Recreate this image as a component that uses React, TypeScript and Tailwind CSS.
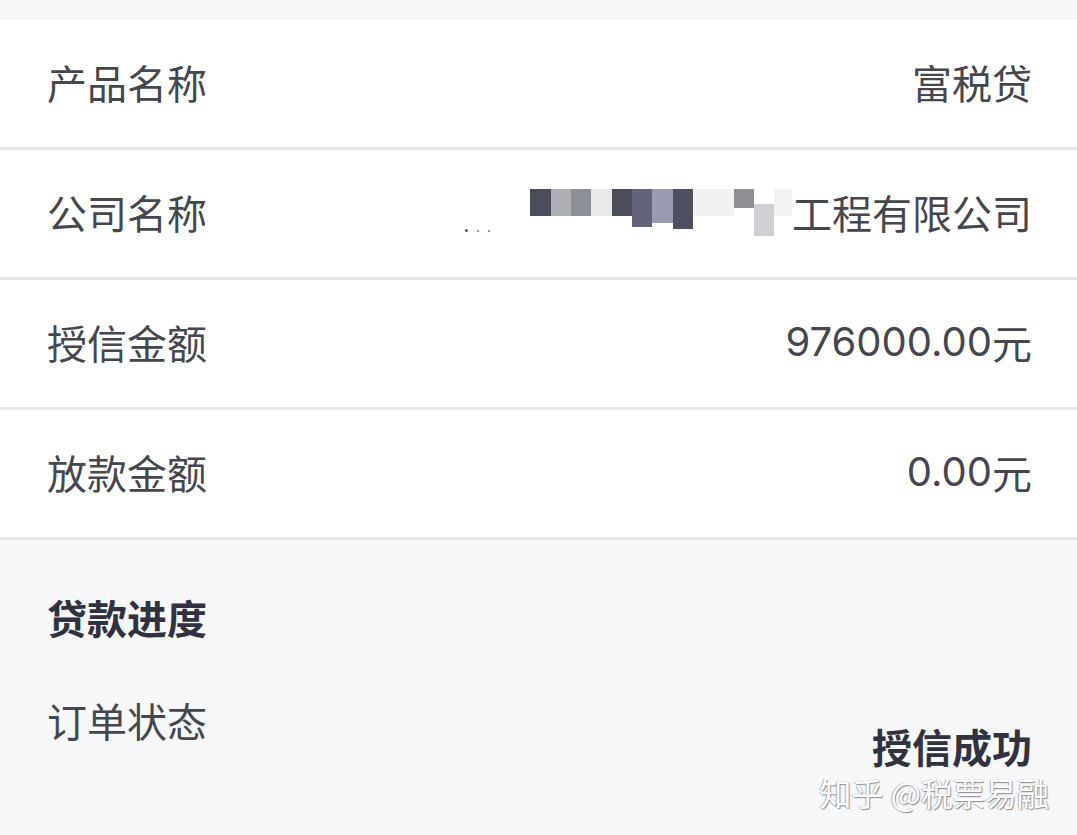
import React from "react"

const font = { fontFamily: '"Noto Sans CJK SC", "Noto Sans", sans-serif' }
const digits = { fontFamily: 'Inter, "Noto Sans CJK SC", sans-serif' }

interface RowProps {
  label: string
  children: React.ReactNode
}

function InfoRow({ label, children }: RowProps) {
  return (
    <div className="flex h-[130px] items-center justify-between border-b-[3px] border-[#e5e6e8] bg-white pb-[4px] pl-[47px] pr-[45px] text-[40px] leading-none text-[#45474f]">
      <span>{label}</span>
      <span className="flex items-center">{children}</span>
    </div>
  )
}

// pixelated mosaic hiding part of the company name
const mosaic = [
  { w: 21, c: "#4a4d5b", h: 27, mt: 0 },
  { w: 20, c: "#adafb4", h: 27, mt: 0 },
  { w: 20, c: "#8c8f95", h: 27, mt: 0 },
  { w: 21, c: "#e9e9eb", h: 27, mt: 0 },
  { w: 20, c: "#4b4e5a", h: 27, mt: 0 },
  { w: 20, c: "#62657a", h: 38, mt: 0 },
  { w: 21, c: "#9a9bb0", h: 34, mt: 0 },
  { w: 20, c: "#4d5063", h: 40, mt: 0 },
  { w: 41, c: "#f1f1f3", h: 27, mt: 0 },
  { w: 20, c: "#8e8f94", h: 19, mt: 0 },
  { w: 20, c: "#cfcfd5", h: 32, mt: 15 },
  { w: 18, c: "#f2f2f4", h: 27, mt: 0 },
]

export default function App() {
  return (
    <div className="relative h-[835px] w-[1077px] overflow-hidden bg-[#f6f7f9]" style={font}>
      <div className="h-[20px]" />
      <InfoRow label="产品名称">富税贷</InfoRow>
      <InfoRow label="公司名称">
        <span className="mr-[40px] flex items-end gap-[9px] self-end pb-[4px]">
          <span className="h-[3px] w-[3px] rounded-full bg-[#555]" />
          <span className="h-[2px] w-[2px] bg-[#999]" />
          <span className="h-[2px] w-[2px] bg-[#999]" />
        </span>
        <span className="flex items-start self-start pt-[2px]">
          {mosaic.map((m, i) => (
            <span
              key={i}
              className="block"
              style={{ width: m.w, height: m.h, marginTop: m.mt, background: m.c }}
            />
          ))}
        </span>
        <span>工程有限公司</span>
      </InfoRow>
      <InfoRow label="授信金额">
        <span style={digits}>976000.00</span>元
      </InfoRow>
      <InfoRow label="放款金额">
        <span style={digits}>0.00</span>元
      </InfoRow>

      <div className="pl-[47px] pr-[45px] pt-[57px] text-[40px] leading-none">
        <div className="font-bold text-[#30323f]">贷款进度</div>
        <div className="mt-[63px] flex justify-between">
          <span className="text-[#45474f]">订单状态</span>
          <span className="mt-[26px] font-bold text-[#30323f]">授信成功</span>
        </div>
      </div>

      <div className="absolute bottom-[27px] right-[28px] text-[32px] leading-none text-white [text-shadow:1px_1px_1px_#8a8c92,-1px_0_1px_#b0b2b6]">
        知乎 @税票易融
      </div>
    </div>
  )
}
